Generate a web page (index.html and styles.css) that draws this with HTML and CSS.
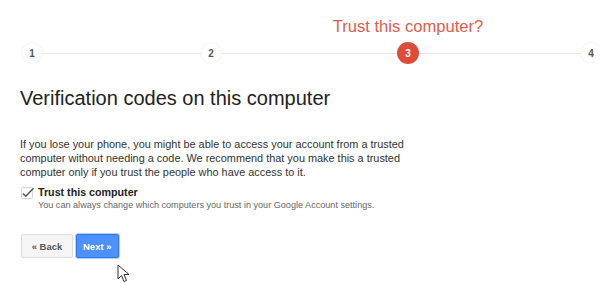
FILE: index.html
```html
<!DOCTYPE html>
<html lang="en">
<head>
  <meta charset="UTF-8" />
  <title>Trust this computer</title>
  <link rel="stylesheet" href="styles.css">
</head>
<body>

  <div class="page">
    <div class="steps">
      <div class="step">1</div>
      <div class="line line-a"></div>
      <div class="step">2</div>
      <div class="line line-b"></div>
      <div class="step current">
        3
        <span class="step-label">Trust this computer?</span>
      </div>
      <div class="line line-c"></div>
      <div class="step">4</div>
    </div>

    <h1>Verification codes on this computer</h1>

    <p class="intro">
      If you lose your phone, you might be able to access your account from a trusted
      computer without needing a code. We recommend that you make this a trusted
      computer only if you trust the people who have access to it.
    </p>

    <div class="trust">
      <svg class="check" width="16" height="14" viewBox="0 0 16 14">
        <rect x="1.5" y="1.5" width="11" height="11" rx="1" fill="#fbfbfb" stroke="#d6d6d6"/>
        <path d="M3 7.5 L5.8 10.3 L13.5 2.2" fill="none" stroke="#555" stroke-width="1.5"/>
      </svg>
      <div class="trust-text">
        <div class="trust-title">Trust this computer</div>
        <div class="trust-note">You can always change which computers you trust in your Google Account settings.</div>
      </div>
    </div>

    <div class="actions">
      <button class="btn btn-back">&laquo; Back</button>
      <button class="btn btn-next">Next &raquo;</button>
    </div>
  </div>

  <!-- mouse pointer from the capture -->
  <svg class="pointer" width="13" height="19" viewBox="0 0 13 19">
    <path d="M1 1 L1 15 L4.5 11.5 L7 17.5 L9.5 16.5 L7 10.5 L12 10.5 Z" fill="#fff" stroke="#333" stroke-width="1" stroke-linejoin="round"/>
  </svg>

</body>
</html>
```

FILE: styles.css
```css
body {
  margin: 0;
  background: #fff;
  font-family: "Liberation Sans", Arial, sans-serif;
  color: #222;
  position: relative;
  height: 283px;
  overflow: hidden;
}

.page {
  padding: 42px 0 0 20px;
}

/* progress steps */
.steps {
  display: flex;
  align-items: center;
  height: 22px;
  margin-left: 2px;
}

.step {
  position: relative;
  width: 20px;
  height: 20px;
  border-radius: 50%;
  background: #fff;
  box-shadow: 0 0 2px rgba(0,0,0,0.12);
  display: flex;
  align-items: center;
  justify-content: center;
  font-size: 10px;
  font-weight: bold;
  color: #555;
  flex: none;
}

.step.current {
  width: 22px;
  height: 22px;
  background: #dd4b39;
  color: #fff;
  box-shadow: none;
}

.step-label {
  position: absolute;
  bottom: 27px;
  left: 50%;
  transform: translateX(-50%);
  white-space: nowrap;
  font-size: 16.6px;
  font-weight: normal;
  color: #df5d4b;
}

.line {
  height: 1px;
  background: #e8e8e8;
  flex: none;
}

.line-a { width: 159px; }
.line-b { width: 176px; }
.line-c { width: 162px; }

h1 {
  margin: 22px 0 0;
  font-size: 20px;
  line-height: 24px;
  font-weight: normal;
  color: #222;
}

.intro {
  margin: 27px 0 0;
  width: 400px;
  font-size: 10.9px;
  line-height: 14px;
  color: #333;
}

.trust {
  display: flex;
  align-items: flex-start;
  gap: 2px;
  margin-top: 7px;
}

.check {
  flex: none;
}

.trust-title {
  font-size: 10.7px;
  line-height: 13px;
  font-weight: bold;
  color: #222;
}

.trust-note {
  font-size: 9.1px;
  line-height: 12px;
  color: #666;
}

.actions {
  display: flex;
  gap: 3px;
  margin-top: 23px;
  margin-left: 1px;
}

.btn {
  height: 24px;
  padding: 0 6px;
  border-radius: 2px;
  font-family: "Liberation Sans", Arial, sans-serif;
  font-size: 9.5px;
  font-weight: bold;
  cursor: pointer;
}

.btn-back {
  min-width: 52px;
  background: #f5f5f5;
  border: 1px solid #dcdcdc;
  color: #555;
}

.btn-next {
  min-width: 42px;
  background: #4d90fe;
  border: 1px solid #3079ed;
  color: #fff;
  box-shadow: 0 0 0 1px #b8d0f8;
}

.pointer {
  position: absolute;
  left: 117px;
  top: 264px;
}
```
